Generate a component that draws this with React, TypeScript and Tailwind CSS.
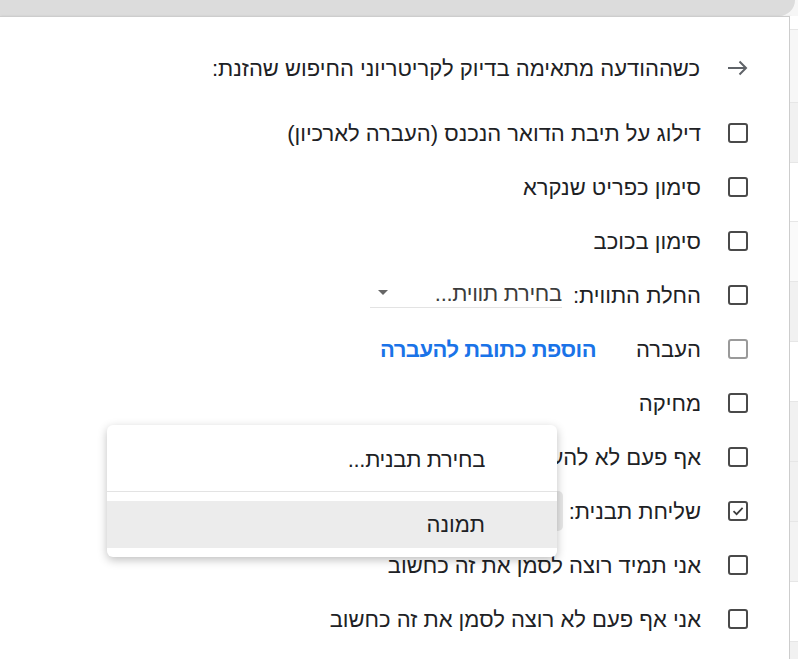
import React from "react";

const Box = ({ checked = false, disabled = false }: { checked?: boolean; disabled?: boolean }) => (
  <div
    className={
      disabled
        ? "w-[20px] h-[20px] border-2 border-[#9a9a9a] rounded-[3px] shrink-0 flex items-center justify-center"
        : "w-[20px] h-[20px] border-2 border-[#4a4a4a] rounded-[3px] shrink-0 flex items-center justify-center"
    }
  >
    {checked && (
      <svg width="14" height="14" viewBox="0 0 14 14">
        <path d="M2.5 7.2 L5.6 10.2 L11.6 3.8" fill="none" stroke="#3c3c3c" strokeWidth="1.7" />
      </svg>
    )}
  </div>
);

const Row = ({ children, box }: { children?: React.ReactNode; box: React.ReactNode }) => (
  <div className="h-[54px] flex items-center gap-[27px]">
    {box}
    <div className="flex items-center">{children}</div>
  </div>
);

export default function App() {
  const stripes = [
    { h: 14, c: "bg-white" },
    { h: 73, c: "bg-[#f7f7f7]" },
    { h: 60, c: "bg-[#f1f1f1]" },
    { h: 59, c: "bg-white" },
    { h: 60, c: "bg-[#fafafa]" },
    { h: 60, c: "bg-[#f1f1f1]" },
    { h: 60, c: "bg-white" },
    { h: 60, c: "bg-[#f1f1f1]" },
    { h: 60, c: "bg-[#f1f1f1]" },
    { h: 60, c: "bg-[#f3f3f3]" },
    { h: 60, c: "bg-white" },
    { h: 40, c: "bg-[#f1f1f1]" },
  ];
  return (
    <div
      className="w-[798px] h-[659px] overflow-hidden relative bg-[#f6f6f6] text-[#202124]"
      style={{ fontFamily: '"Liberation Sans", Arimo, "DejaVu Sans", sans-serif' }}
    >
      <div className="h-[16px] w-[795px] bg-[#dcdcdc] rounded-br-[22px]" />
      <div className="flex h-[643px]">
        <div className="w-[790px] h-full bg-white border-t border-r border-[#cdcdcd] shadow-[1px_0_2px_rgba(0,0,0,0.08)]">
          <div dir="rtl" className="pr-[41px] pt-[24px] text-[22px]">
            <div className="h-[54px] flex items-center gap-[27px]">
              <svg width="21" height="16" viewBox="0 0 21 16" className="shrink-0">
                <path d="M1 8 H19 M12.5 1.5 L19 8 L12.5 14.5" fill="none" stroke="#5f6368" strokeWidth="2" />
              </svg>
              <span>כשההודעה מתאימה בדיוק לקריטריוני החיפוש שהזנת:</span>
            </div>
            <div className="mt-[11px]">
              <Row box={<Box />}>
                <span>דילוג על תיבת הדואר הנכנס (העברה לארכיון)</span>
              </Row>
              <Row box={<Box />}>
                <span>סימון כפריט שנקרא</span>
              </Row>
              <Row box={<Box />}>
                <span>סימון בכוכב</span>
              </Row>
              <Row box={<Box />}>
                <span>החלת התווית:</span>
                <div className="mr-[11px] w-[192px] h-[28px] flex items-center justify-between border-b border-[#e3e3e3] self-start mt-[1px]">
                  <span className="text-[#3c3c3c] tracking-[-0.3px]">בחירת תווית...</span>
                  <svg width="12" height="8" viewBox="0 0 12 8" className="ml-[7px]">
                    <path d="M1 1 H11 L6 6 Z" fill="#666" />
                  </svg>
                </div>
              </Row>
              <Row box={<Box disabled />}>
                <span>העברה</span>
                <span className="mr-[40px] text-[#1a73e8] font-semibold tracking-[-0.5px]">הוספת כתובת להעברה</span>
              </Row>
              <Row box={<Box />}>
                <span>מחיקה</span>
              </Row>
              <Row box={<Box />}>
                <span>אף פעם לא להעביר לספאם</span>
              </Row>
              <Row box={<Box checked />}>
                <span>שליחת תבנית:</span>
                <div className="mr-[6px] w-[200px] h-[40px] bg-[#e8e8e8] rounded-[5px]" />
              </Row>
              <Row box={<Box />}>
                <span>אני תמיד רוצה לסמן את זה כחשוב</span>
              </Row>
              <Row box={<Box />}>
                <span>אני אף פעם לא רוצה לסמן את זה כחשוב</span>
              </Row>
            </div>
          </div>
        </div>
        <div className="flex-1 flex flex-col">
          {stripes.map((s, i) => (
            <div key={i} className={`${s.c} border-b border-[#e6e6e6] shrink-0`} style={{ height: s.h }} />
          ))}
        </div>
      </div>

      <div
        dir="rtl"
        className="absolute left-[107px] top-[425px] w-[450px] h-[132px] bg-white rounded-[6px] shadow-[0_3px_10px_rgba(0,0,0,0.25)] pt-[10px] text-[22px]"
      >
        <div className="h-[48px] flex items-center pr-[72px] tracking-[-0.3px]">בחירת תבנית...</div>
        <div className="mt-[8px] h-px bg-[#e3e3e3]" />
        <div className="mt-[9px] h-[47px] bg-[#ececec] flex items-center pr-[72px]">תמונה</div>
      </div>
    </div>
  );
}
